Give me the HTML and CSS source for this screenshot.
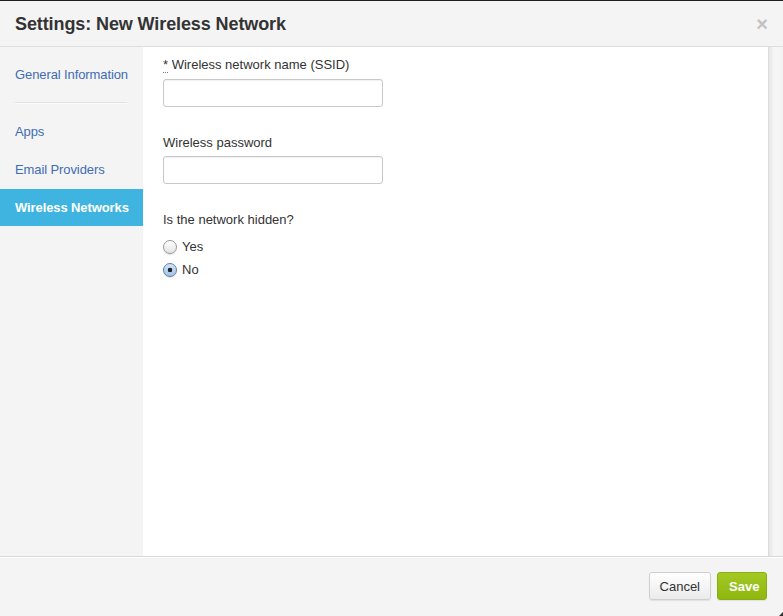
FILE: index.html
```html
<!DOCTYPE html>
<html>
<head>
<meta charset="utf-8">
<title>Settings: New Wireless Network</title>
<link rel="stylesheet" href="styles.css">
</head>
<body>
<div class="modal">
  <div class="modal-header">
    <h3 class="title">Settings: New Wireless Network</h3>
    <span class="close">&times;</span>
  </div>
  <div class="modal-body">
    <nav class="sidebar">
      <a class="nav-item">General Information</a>
      <div class="nav-divider"></div>
      <a class="nav-item">Apps</a>
      <a class="nav-item">Email Providers</a>
      <a class="nav-item active">Wireless Networks</a>
    </nav>
    <div class="content">
      <div class="field">
        <label class="label"><abbr class="req">*</abbr> Wireless network name (SSID)</label>
        <input class="text-input" type="text">
      </div>
      <div class="field">
        <label class="label">Wireless password</label>
        <input class="text-input" type="password">
      </div>
      <div class="field">
        <label class="label">Is the network hidden?</label>
        <div class="radios">
          <label class="radio"><input type="radio" name="hidden"> Yes</label>
          <label class="radio"><input type="radio" name="hidden" checked> No</label>
        </div>
      </div>
    </div>
    <div class="scrollbar"></div>
  </div>
  <div class="modal-footer">
    <button class="btn">Cancel</button>
    <button class="btn btn-save">Save</button>
  </div>
  <span class="grip"></span>
</div>
</body>
</html>
```

FILE: styles.css
```css
* { box-sizing: border-box; }
html, body { margin: 0; padding: 0; }
body {
  font-family: "Liberation Sans", Arial, Helvetica, sans-serif;
  font-size: 13px;
  color: #333;
  background: #f4f4f4;
}
.modal {
  width: 783px;
  height: 616px;
  display: flex;
  flex-direction: column;
  border-top: 1px solid #1e1e1e;
  position: relative;
  overflow: hidden;
}
.modal-header {
  height: 46px;
  flex: none;
  background: #f4f4f4;
  border-bottom: 1px solid #dedede;
  display: flex;
  align-items: center;
  justify-content: space-between;
  padding: 1px 15px 0 15px;
}
.title {
  margin: 0;
  font-size: 18px;
  font-weight: bold;
  color: #333;
  letter-spacing: -0.1px;
}
.close {
  font-size: 20px;
  font-weight: bold;
  color: #c2c2c2;
  line-height: 20px;
}
.modal-body {
  flex: 1;
  display: flex;
  min-height: 0;
}
.sidebar {
  width: 143px;
  flex: none;
  background: #f4f4f4;
  display: flex;
  flex-direction: column;
  padding-top: 9px;
}
.nav-item {
  display: block;
  padding: 11px 0 12px 15px;
  color: #3f6cb3;
  line-height: 15px;
  white-space: nowrap;
  letter-spacing: -0.1px;
  cursor: pointer;
}
.nav-item.active {
  background: #40b4e0;
  color: #fff;
  font-weight: bold;
  padding-top: 11px;
  padding-bottom: 11px;
}
.nav-divider {
  height: 2px;
  background: #e2e2e2;
  margin: 8px 16px 9px 15px;
  border-bottom: 1px solid #fbfbfb;
}
.content {
  flex: 1;
  background: #fff;
  padding: 10px 20px 0 20px;
  display: flex;
  flex-direction: column;
}
.field {
  display: flex;
  flex-direction: column;
  margin-bottom: 28px;
}
.label {
  line-height: 16px;
  margin-bottom: 6px;
  color: #333;
}
.field + .field .label {
  margin-bottom: 5px;
}
.req {
  text-decoration: none;
  border-bottom: 1px dotted #777;
}
.text-input {
  width: 220px;
  height: 28px;
  border: 1px solid #c8c8c8;
  border-radius: 3px;
  box-shadow: inset 0 1px 1px rgba(0,0,0,0.06);
  font: inherit;
  padding: 4px 6px;
  margin: 0;
}
.radios {
  display: flex;
  flex-direction: column;
  gap: 5px;
  padding-top: 5px;
}
.radio {
  display: flex;
  align-items: center;
  gap: 5px;
  line-height: 18px;
  color: #333;
}
.radio input {
  -webkit-appearance: none;
  appearance: none;
  width: 14px;
  height: 14px;
  margin: 0;
  border-radius: 50%;
  border: 1px solid #9a9a9a;
  background: linear-gradient(#ffffff, #e4e4e4);
  box-shadow: 0 1px 1px rgba(0,0,0,0.12);
}
.radio input:checked {
  border-color: #5c7fa6;
  background: radial-gradient(circle, #1c2430 0 2px, transparent 2.6px), linear-gradient(#d2e3f5, #a5c4e8);
}
.scrollbar {
  width: 15px;
  flex: none;
  background: linear-gradient(to right, #e6e6e6, #f6f6f6 40%, #f3f3f3);
  border-left: 1px solid #dcdcdc;
}
.modal-footer {
  height: 60px;
  flex: none;
  background: #f4f4f4;
  border-top: 1px solid #d9d9d9;
  box-shadow: inset 0 1px 0 #fff;
  display: flex;
  justify-content: flex-end;
  align-items: flex-start;
  padding: 15px 16px 0 0;
  gap: 6px;
}
.btn {
  height: 28px;
  padding: 0 10px;
  font: inherit;
  font-size: 13px;
  color: #333;
  border: 1px solid #cfcfcf;
  border-radius: 3px;
  background: linear-gradient(#ffffff, #ebebeb);
  box-shadow: 0 1px 1px rgba(0,0,0,0.08);
  margin: 0;
}
.btn-save {
  color: #fff;
  font-weight: bold;
  background: linear-gradient(#a3c924, #8fb70f);
  border-color: #89ad12;
  padding: 0 11px;
  width: 50px;
}
.grip {
  position: absolute;
  right: 0;
  bottom: 0;
  width: 0;
  height: 0;
  border-left: 4px solid transparent;
  border-bottom: 4px solid #333;
}
```
